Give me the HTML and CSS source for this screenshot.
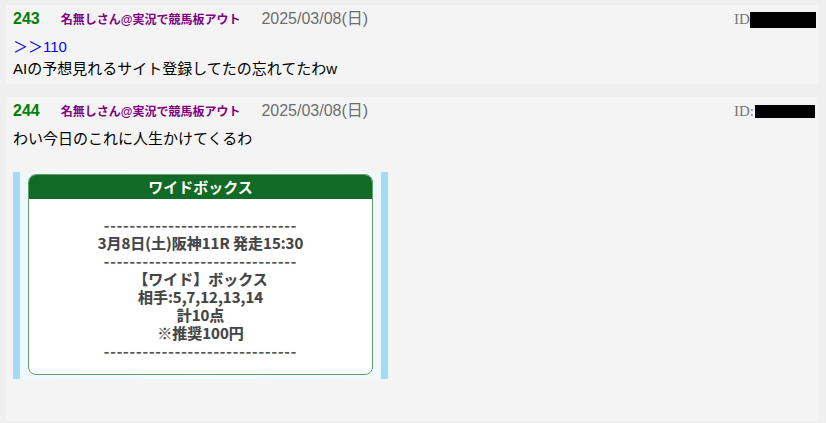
FILE: index.html
```html
<!DOCTYPE html>
<html lang="ja">
<head>
  <meta charset="UTF-8" />
  <meta name="viewport" content="width=device-width, initial-scale=1" />
  <title>競馬板 スレッド</title>
  <link rel="stylesheet" href="styles.css">
</head>
<body>

  <div class="thread">

    <div class="post">
      <div class="meta">
        <span class="num">243</span>
        <span class="name">名無しさん@実況で競馬板アウト</span>
        <span class="date">2025/03/08(日)</span>
        <span class="uid">ID:<span class="mask mask-wide"></span></span>
      </div>
      <div class="message">
        <a class="anchor" href="#">＞＞110</a><br>
        AIの予想見れるサイト登録してたの忘れてたわw
      </div>
    </div>

    <div class="post">
      <div class="meta">
        <span class="num">244</span>
        <span class="name">名無しさん@実況で競馬板アウト</span>
        <span class="date">2025/03/08(日)</span>
        <span class="uid">ID:<span class="mask mask-narrow"></span></span>
      </div>
      <div class="message">
        わい今日のこれに人生かけてくるわ<br>
        <br>
        <div class="pic">
          <div class="card">
            <div class="card-title">ワイドボックス</div>
            <div class="card-body">
              <div class="rule">------------------------------</div>
              <div>3月8日(土)阪神11R 発走15:30</div>
              <div class="rule">------------------------------</div>
              <div>【ワイド】ボックス</div>
              <div>相手:5,7,12,13,14</div>
              <div>計10点</div>
              <div>※推奨100円</div>
              <div class="rule">------------------------------</div>
            </div>
          </div>
        </div>
      </div>
    </div>

  </div>

</body>
</html>
```

FILE: styles.css
```css
body {
  margin: 0;
  background-color: #efefef;
  font-family: "Liberation Sans", "Noto Sans CJK JP", sans-serif;
  color: #000;
}

.thread {
  display: flex;
  flex-direction: column;
  gap: 13px;
  padding: 5px 7px 5px 6px;
}

.post {
  background-color: #f4f4f4;
  padding: 4px 3px 4px 7px;
}

.meta {
  display: flex;
  align-items: baseline;
  gap: 21px;
  height: 20px;
  line-height: 20px;
}

.num {
  color: #008000;
  font-weight: bold;
  font-size: 16px;
}

.name {
  color: #800080;
  font-weight: bold;
  font-size: 12px;
}

.date {
  color: #6e6e6e;
  font-size: 16px;
}

.uid {
  margin-left: auto;
  align-self: center;
  display: flex;
  align-items: center;
  font-family: "Liberation Serif", serif;
  font-size: 15px;
  color: #777;
}

.mask {
  display: inline-block;
  background-color: #000;
}

.mask-wide {
  width: 66px;
  height: 16px;
  margin-left: -4px;
  margin-top: 2px;
}

.mask-narrow {
  width: 60px;
  height: 13px;
  margin-left: 1px;
  margin-right: 1px;
}

.message {
  margin-top: 7px;
  font-size: 15px;
  line-height: 22px;
}

.anchor {
  color: #0000ff;
  text-decoration: none;
}

.pic {
  width: 375px;
  height: 207px;
  margin-bottom: 38px;
  box-sizing: border-box;
  padding: 2px 15px 4px 15px;
  background: linear-gradient(to right,
    #a3dbf7 0, #a3dbf7 7px,
    #eef8fd 7px, #f6fbfe 50%, #eef8fd 368px,
    #a3dbf7 368px, #a3dbf7 100%);
}

.card {
  height: 100%;
  box-sizing: border-box;
  background-color: #fff;
  border: 1.5px solid #64a16a;
  border-radius: 8px;
  overflow: hidden;
  font-family: "Noto Sans CJK JP", sans-serif;
  font-weight: bold;
  text-align: center;
}

.card-title {
  background-color: #116a25;
  color: #fff;
  font-size: 15px;
  height: 24px;
  line-height: 24px;
}

.card-body {
  padding-top: 17px;
  color: #454545;
  font-size: 15px;
  line-height: 18px;
  text-shadow: 0 0 1px rgba(0, 0, 0, 0.25);
}

.rule {
  letter-spacing: 0.9px;
  color: #555;
}
```
